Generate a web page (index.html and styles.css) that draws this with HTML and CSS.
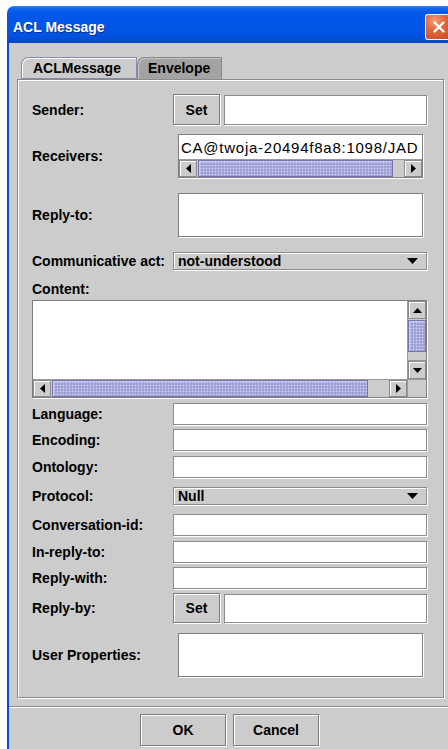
FILE: index.html
```html
<!DOCTYPE html>
<html>
<head>
<meta charset="utf-8">
<title>ACL Message</title>
<link rel="stylesheet" href="styles.css">
</head>
<body>
<div class="window">
  <div class="titlebar">
    <span class="title">ACL Message</span>
    <span class="close">
      <svg width="14" height="14" viewBox="0 0 14 14"><path d="M2.5 2.5 L11.5 11.5 M11.5 2.5 L2.5 11.5" stroke="#fff" stroke-width="2.4" stroke-linecap="round"/></svg>
    </span>
  </div>
  <div class="client">
    <div class="tabs">
      <div class="tab tab-active">ACLMessage</div>
      <div class="tab tab-other">Envelope</div>
    </div>
    <div class="tabpanel">
      <div class="row r-sender">
        <div class="label">Sender:</div>
        <div class="ctrl split">
          <button class="btn btn-set">Set</button>
          <div class="field field-fill"></div>
        </div>
      </div>

      <div class="row r-receivers">
        <div class="label">Receivers:</div>
        <div class="ctrl">
          <div class="pane list">
            <div class="listtext">CA@twoja-20494f8a8:1098/JAD</div>
            <div class="hscroll">
              <div class="sbtn"><svg width="5" height="9" viewBox="0 0 5 9"><polygon points="5,0 5,9 0,4.5" fill="#000"/></svg></div>
              <div class="thumb h-thumb-recv"></div>
              <div class="track"></div>
              <div class="sbtn"><svg width="5" height="9" viewBox="0 0 5 9"><polygon points="0,0 0,9 5,4.5" fill="#000"/></svg></div>
            </div>
          </div>
        </div>
      </div>

      <div class="row r-replyto">
        <div class="label">Reply-to:</div>
        <div class="ctrl"><div class="pane"></div></div>
      </div>

      <div class="row r-act">
        <div class="label">Communicative act:</div>
        <div class="ctrl">
          <div class="combo combo-act">
            <span>not-understood</span>
            <svg width="11" height="6" viewBox="0 0 11 6"><polygon points="0,0 11,0 5.5,6" fill="#000"/></svg>
          </div>
        </div>
      </div>

      <div class="content-block">
        <div class="label content-label">Content:</div>
        <div class="textpane">
          <div class="textarea"></div>
          <div class="vscroll">
            <div class="sbtn"><svg width="9" height="5" viewBox="0 0 9 5"><polygon points="0,5 9,5 4.5,0" fill="#000"/></svg></div>
            <div class="thumb v-thumb"></div>
            <div class="track"></div>
            <div class="sbtn"><svg width="9" height="5" viewBox="0 0 9 5"><polygon points="0,0 9,0 4.5,5" fill="#000"/></svg></div>
          </div>
          <div class="hscroll">
            <div class="sbtn"><svg width="5" height="9" viewBox="0 0 5 9"><polygon points="5,0 5,9 0,4.5" fill="#000"/></svg></div>
            <div class="thumb h-thumb-content"></div>
            <div class="track"></div>
            <div class="sbtn"><svg width="5" height="9" viewBox="0 0 5 9"><polygon points="0,0 0,9 5,4.5" fill="#000"/></svg></div>
          </div>
          <div class="corner"></div>
        </div>
      </div>

      <div class="lower">
        <div class="row r-small">
          <div class="label">Language:</div>
          <div class="ctrl"><div class="field"></div></div>
        </div>
        <div class="row r-small">
          <div class="label">Encoding:</div>
          <div class="ctrl"><div class="field"></div></div>
        </div>
        <div class="row r-small">
          <div class="label">Ontology:</div>
          <div class="ctrl"><div class="field"></div></div>
        </div>
        <div class="row r-protocol">
          <div class="label">Protocol:</div>
          <div class="ctrl">
            <div class="combo combo-proto">
              <span>Null</span>
              <svg width="11" height="6" viewBox="0 0 11 6"><polygon points="0,0 11,0 5.5,6" fill="#000"/></svg>
            </div>
          </div>
        </div>
        <div class="row r-small">
          <div class="label">Conversation-id:</div>
          <div class="ctrl"><div class="field"></div></div>
        </div>
        <div class="row r-small">
          <div class="label">In-reply-to:</div>
          <div class="ctrl"><div class="field"></div></div>
        </div>
        <div class="row r-small">
          <div class="label">Reply-with:</div>
          <div class="ctrl"><div class="field"></div></div>
        </div>
        <div class="row r-replyby">
          <div class="label">Reply-by:</div>
          <div class="ctrl split">
            <button class="btn btn-set">Set</button>
            <div class="field field-fill"></div>
          </div>
        </div>
      </div>

      <div class="row r-userprops">
        <div class="label">User Properties:</div>
        <div class="ctrl"><div class="pane"></div></div>
      </div>
    </div>

    <div class="separator"></div>
    <div class="buttonbar">
      <button class="btn btn-dialog">OK</button>
      <button class="btn btn-dialog">Cancel</button>
    </div>
  </div>
</div>
</body>
</html>
```

FILE: styles.css
```css
html, body {
  margin: 0;
  width: 448px;
  height: 749px;
  overflow: hidden;
  background: #ffffff;
}

body {
  font-family: "Liberation Sans", Arial, sans-serif;
  color: #000;
}

/* window frame: runs off the right edge of the viewport */
.window {
  margin: 6px 0 0 7px;
  width: 441px;
}

.titlebar {
  height: 37px;
  box-sizing: border-box;
  display: flex;
  align-items: flex-start;
  padding-left: 6px;
  border-radius: 7px 0 0 0;
  background: linear-gradient(#3a8cf6 0, #1468ec 2px, #0358e9 6px, #0155e5 26px, #0250dc 32px, #0a44c2 37px);
}

.title {
  margin-top: 13px;
  font-size: 14px;
  line-height: 17px;
  font-weight: bold;
  color: #fff;
  text-shadow: 1px 1px 0 #0c2f8f;
}

.close {
  margin-left: auto;
  margin-top: 8px;
  width: 23px;
  height: 26px;
  box-sizing: border-box;
  padding-left: 3px;
  border: 1px solid #f4f4f4;
  border-right: none;
  border-radius: 3px 0 0 3px;
  display: flex;
  align-items: center;
  justify-content: center;
  background: radial-gradient(circle at 40% 25%, #f49a78 0, #e0683f 45%, #c84a22 100%);
}

.client {
  background: #cccccc;
  border-left: 2px solid #0a4bd4;
  padding-top: 14px;
  height: 720px;
}

/* tabs */
.tabs {
  display: flex;
  margin-left: 12px;
  height: 22px;
}

.tab {
  height: 22px;
  box-sizing: border-box;
  font-size: 14px;
  font-weight: bold;
  line-height: 20px;
  border-top-left-radius: 7px 8px;
}

.tab-active {
  width: 116px;
  padding-left: 11px;
  background: #cccccc;
  border: 1px solid #8a8aae;
  box-shadow: inset 1px 1px 0 #ffffff;
}

.tab-other {
  width: 85px;
  padding-left: 10px;
  background: #a3a3a3;
  border: 1px solid #888888;
  border-bottom: none;
  box-shadow: inset 1px 1px 0 #c4c4c4;
}

.tabpanel {
  margin-left: 8px;
  width: 427px;
  box-sizing: border-box;
  border: 1px solid #8a8a8a;
  box-shadow: inset 1px 1px 0 #ffffff, 1px 1px 0 #ffffff;
  padding: 14px 16px 20px 14px;
}

/* form rows */
.row {
  display: flex;
  align-items: center;
}

.label {
  width: 141px;
  flex: none;
  font-size: 14px;
  font-weight: bold;
  white-space: nowrap;
}

.ctrl {
  flex: 1;
  min-width: 0;
}

.split {
  display: flex;
  gap: 4px;
  height: 100%;
}

.r-sender { height: 31px; }
.r-receivers { height: 44px; margin-top: 9px; }
.r-replyto { height: 44px; margin-top: 15px; }
.r-act { height: 29px; margin-top: 9px; }
.r-small { height: 22px; }
.r-protocol { height: 28px; }
.r-replyby { height: 30px; }
.r-userprops { height: 44px; margin-top: 10px; }

.lower {
  margin-top: 5px;
  display: flex;
  flex-direction: column;
  gap: 4.33px;
}

.field {
  height: 22px;
  box-sizing: border-box;
  background: #ffffff;
  border: 1px solid #8c8c8c;
  box-shadow: 1px 1px 0 #ffffff;
}

.field-fill {
  flex: 1;
  margin-top: 1px;
}

.r-sender .field-fill { height: 30px; }
.r-replyby .field-fill { height: 29px; }

/* buttons */
.btn {
  font-family: "Liberation Sans", Arial, sans-serif;
  font-size: 14px;
  font-weight: bold;
  color: #000;
  background: #cccccc;
  border: 1px solid #7c7c7c;
  box-shadow: inset 1px 1px 0 #ffffff, 1px 1px 0 #ffffff;
  padding: 0;
  margin: 0;
}

.btn-set {
  width: 47px;
  height: 100%;
  flex: none;
}

/* combo boxes */
.combo {
  box-sizing: border-box;
  height: 100%;
  display: flex;
  align-items: center;
  justify-content: space-between;
  padding: 0 8px 0 4px;
  border: 1px solid #8c8c8c;
  box-shadow: inset 1px 1px 0 #ffffff, 1px 1px 0 #ffffff;
  font-size: 14px;
  font-weight: bold;
}

/* scroll panes */
.pane {
  margin: 0 4px 0 5px;
  height: 44px;
  box-sizing: border-box;
  background: #ffffff;
  border: 1px solid #808080;
  box-shadow: 1px 1px 0 #ffffff;
}

.list {
  display: flex;
  flex-direction: column;
}

.listtext {
  flex: 1;
  padding-left: 2px;
  font-size: 15px;
  line-height: 25px;
  letter-spacing: 0.75px;
  white-space: nowrap;
  overflow: hidden;
}

.hscroll {
  height: 18px;
  display: flex;
  background: #cccccc;
  box-sizing: border-box;
  border-top: 1px solid #9a9a9a;
}

.vscroll {
  display: flex;
  flex-direction: column;
  background: #cccccc;
  border-left: 1px solid #9a9a9a;
}

.sbtn {
  flex: none;
  width: 18px;
  height: 17px;
  box-sizing: border-box;
  display: flex;
  align-items: center;
  justify-content: center;
  background: #cccccc;
  border: 1px solid #8a8a8a;
  box-shadow: inset 1px 1px 0 #ffffff;
}

.vscroll .sbtn {
  width: 18px;
  height: 18px;
}

.thumb {
  box-sizing: border-box;
  background-color: #a0a0d4;
  background-image: radial-gradient(circle, #d4d4f6 0.7px, transparent 1.1px);
  background-size: 3px 3px;
  border: 1px solid #7474b0;
  box-shadow: inset 1px 1px 0 #c8c8f0;
}

.track {
  flex: 1;
}

.h-thumb-recv { width: 195px; margin-left: 1px; }
.h-thumb-content { width: 316px; margin-left: 1px; }
.v-thumb { height: 32px; margin-top: 1px; }
.vscroll .track { border-top: 1px solid #9a9a9a; margin-top: 8px; }

/* content text area */
.content-label {
  padding-top: 5px;
  line-height: 18px;
  height: 20px;
}

.textpane {
  height: 98px;
  box-sizing: border-box;
  display: grid;
  grid-template-columns: 1fr 19px;
  grid-template-rows: 1fr 18px;
  border: 1px solid #808080;
  box-shadow: 1px 1px 0 #ffffff;
}

.textarea {
  background: #ffffff;
}

.corner {
  background: #cccccc;
  border-top: 1px solid #9a9a9a;
  border-left: 1px solid #9a9a9a;
}

/* dialog buttons */
.separator {
  margin-top: 8px;
  border-top: 1px solid #8a8a8a;
  border-bottom: 1px solid #ffffff;
}

.buttonbar {
  display: flex;
  justify-content: center;
  gap: 7px;
  padding: 6px 0 0 2px;
}

.btn-dialog {
  width: 86px;
  height: 32px;
}
```
